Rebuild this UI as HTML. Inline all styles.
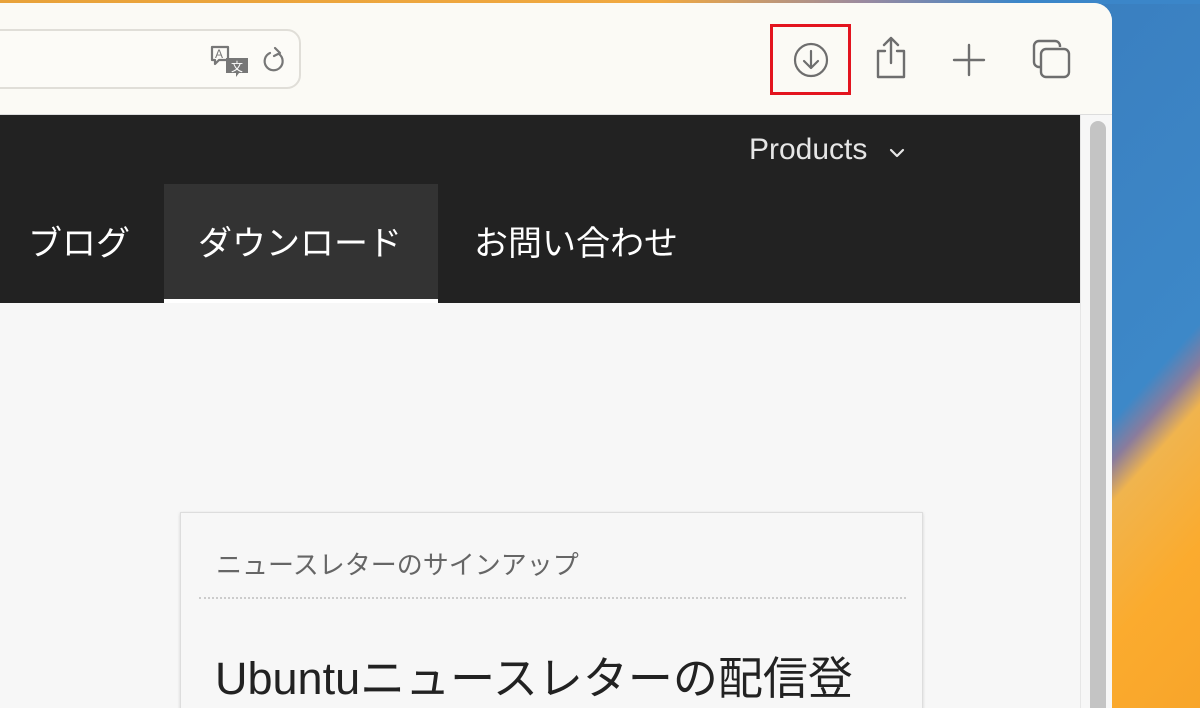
<!DOCTYPE html>
<html><head><meta charset="utf-8"><style>
*{margin:0;padding:0;box-sizing:border-box}
body{width:1200px;height:708px;overflow:hidden;position:relative;font-family:"Liberation Sans","Noto Sans CJK JP",sans-serif;background:#3b86c9}
.strip{position:absolute;left:1100px;top:0;width:100px;height:708px;background:linear-gradient(132deg,#3a7fc0 0%,#3d88c8 53%,#8a7c9c 58%,#f0b44e 63%,#fbab2e 80%,#f8a52a 100%)}
.topline{position:absolute;left:0;top:0;width:1200px;height:4px;background:linear-gradient(90deg,#e8a23a,#f0a840 55%,#9a8aa0 72%,#3b86c9 85%)}
.win{position:absolute;left:0;top:3px;width:1112px;height:705px;background:#f7f7f7;border-top-right-radius:18px;overflow:hidden}
.tb{position:absolute;left:0;top:0;width:1112px;height:112px;background:#fbfaf5;border-bottom:1px solid #ddd}
.url{position:absolute;left:-20px;top:26px;width:321px;height:60px;border:2px solid #e0ded8;border-radius:14px;background:#fcfbf7}
.nav{position:absolute;left:0;top:112px;width:1080px;height:188px;background:#222}
.nav .t{position:absolute;top:110px;color:#fff;font-size:34px;line-height:38px}
.active{position:absolute;left:164px;top:69px;width:274px;height:119px;background:#333;border-bottom:4px solid #fff}
.prod{position:absolute;left:749px;top:18px;color:#e6e6e6;font-size:30px}
.sb{position:absolute;left:1080px;top:112px;width:32px;height:593px;background:#f7f7f7;border-left:1px solid #e6e6e6}
.thumb{position:absolute;left:1090px;top:118px;width:16px;height:600px;background:#c4c4c4;border-radius:8px}
.card{position:absolute;left:180px;top:509px;width:743px;height:220px;background:#f7f7f7;border:1px solid #ddd;box-shadow:0 1px 3px rgba(0,0,0,.15)}
.sub{position:absolute;left:35px;top:32px;font-size:26px;color:#666}
.dot{position:absolute;left:18px;top:84px;width:707px;border-top:2px dotted #ccc}
.h{position:absolute;left:34px;top:129px;font-size:45px;color:#222}
</style></head><body>
<div class="strip"></div>
<div class="topline"></div>
<div class="win">
 <div class="tb">
  <div class="url">
   <svg style="position:absolute;left:227px;top:13px" width="42" height="34" viewBox="0 0 42 34">
    <path d="M3 3h16v13h-9l-4 4v-4H3z" fill="none" stroke="#777" stroke-width="2.2" stroke-linejoin="round"/>
    <text x="6" y="14" font-size="12" fill="#777" font-family="Liberation Sans">A</text>
    <path d="M17 14h22v15h-9l-3 4v-4h-10z" fill="#777"/>
    <text x="22" y="27" font-size="12" fill="#fff" font-family="Noto Sans CJK JP">文</text>
   </svg>
   <svg style="position:absolute;left:280px;top:14px" width="26" height="30" viewBox="0 0 26 30">
    <path d="M17 9a9 9 0 1 1-9-1" fill="none" stroke="#777" stroke-width="2.2" stroke-linecap="round"/>
    <path d="M13 3l5 5-6 3" fill="none" stroke="#777" stroke-width="2.2" stroke-linecap="round" stroke-linejoin="round"/>
   </svg>
  </div>
  <div style="position:absolute;left:770px;top:21px;width:81px;height:71px;border:3px solid #e3141f"></div>
  <svg style="position:absolute;left:792px;top:38px" width="38" height="38" viewBox="0 0 38 38"><circle cx="19" cy="19" r="16" fill="none" stroke="#6e6e6e" stroke-width="2.2"/><path d="M19 10v17M12 20l7 7 7-7" fill="none" stroke="#6e6e6e" stroke-width="2.2" stroke-linecap="round" stroke-linejoin="round"/></svg>
  <svg style="position:absolute;left:873px;top:32px" width="36" height="46" viewBox="0 0 36 46"><path d="M12 16H5v26h26V16h-7M18 3v25M11 10l7-7 7 7" fill="none" stroke="#6e6e6e" stroke-width="2.4" stroke-linecap="round" stroke-linejoin="round"/></svg>
  <svg style="position:absolute;left:952px;top:40px" width="34" height="34" viewBox="0 0 34 34"><path d="M17 2v30M2 17h30" stroke="#6e6e6e" stroke-width="2.4" stroke-linecap="round"/></svg>
  <svg style="position:absolute;left:1032px;top:36px" width="40" height="40" viewBox="0 0 40 40"><rect x="9" y="10" width="28" height="28" rx="5" fill="none" stroke="#6e6e6e" stroke-width="2.4"/><path d="M28 8V7a5 5 0 0 0-5-5H7a5 5 0 0 0-5 5v16a5 5 0 0 0 5 5h2" fill="none" stroke="#6e6e6e" stroke-width="2.4"/></svg>
 </div>
 <div class="nav">
  <div class="active"></div>
  <div class="prod">Products</div>
  <svg style="position:absolute;left:884px;top:28px" width="26" height="20" viewBox="0 0 26 20"><path d="M7 7l6 6 6-6" fill="none" stroke="#e6e6e6" stroke-width="2.2" stroke-linecap="round" stroke-linejoin="round"/></svg>
  <div class="t" style="left:28px">ブログ</div>
  <div class="t" style="left:198px">ダウンロード</div>
  <div class="t" style="left:474px">お問い合わせ</div>
 </div>
 <div class="sb"></div>
 <div class="thumb"></div>
 <div class="card">
  <div class="sub">ニュースレターのサインアップ</div>
  <div class="dot"></div>
  <div class="h">Ubuntuニュースレターの配信登</div>
 </div>
</div>
</body></html>
